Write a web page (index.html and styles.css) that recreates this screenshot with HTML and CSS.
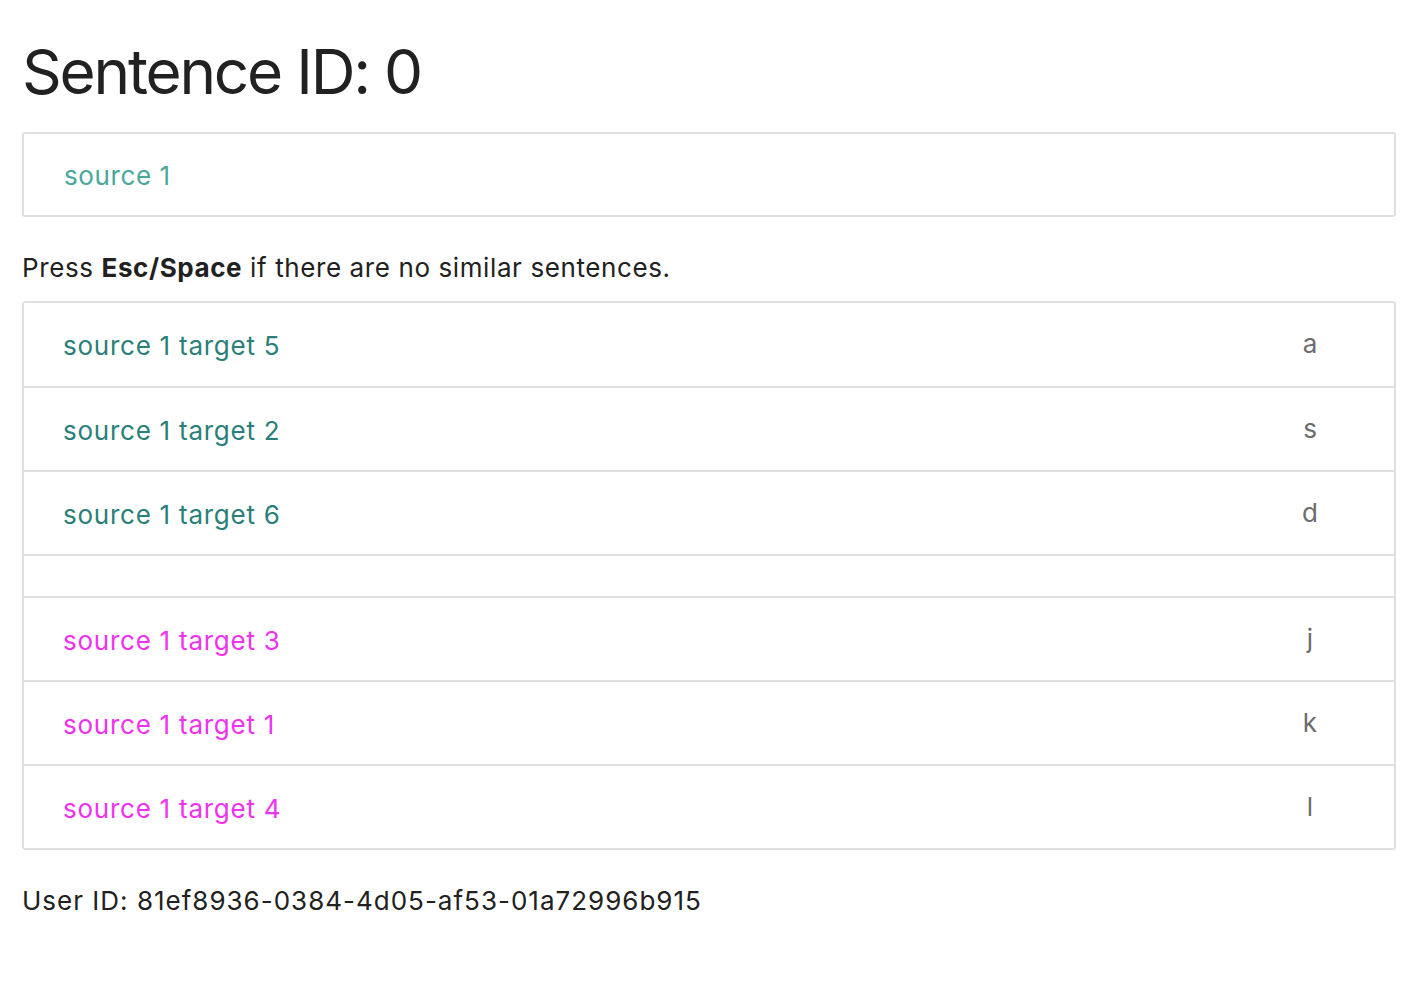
FILE: index.html
```html
<!DOCTYPE html>
<html>
<head>
<meta charset="utf-8">
<link rel="stylesheet" href="styles.css">
</head>
<body>
<div class="page">
  <h1 class="title">Sentence ID: 0</h1>
  <div class="card source-card"><span class="source">source 1</span></div>
  <p class="hint">Press <b>Esc/Space</b> if there are no similar sentences.</p>
  <ul class="list">
    <li class="row"><span class="txt teal">source 1 target 5</span><span class="key">a</span></li>
    <li class="row"><span class="txt teal">source 1 target 2</span><span class="key">s</span></li>
    <li class="row"><span class="txt teal">source 1 target 6</span><span class="key">d</span></li>
    <li class="row spacer"></li>
    <li class="row"><span class="txt pink">source 1 target 3</span><span class="key">j</span></li>
    <li class="row"><span class="txt pink">source 1 target 1</span><span class="key">k</span></li>
    <li class="row"><span class="txt pink">source 1 target 4</span><span class="key">l</span></li>
  </ul>
  <p class="user">User ID: 81ef8936-0384-4d05-af53-01a72996b915</p>
</div>
</body>
</html>
```
FILE: styles.css
```css
html, body { margin: 0; padding: 0; background: #fff; }
body { font-family: Inter, "Noto Sans", sans-serif; color: #212121; }
.page { padding: 0 14px 0 22px; }
.title { margin: 0; padding-top: 36px; font-size: 62px; font-weight: 400; line-height: 72px; letter-spacing: -2.2px; }
.card { border: 2px solid #e0e0e0; border-radius: 3px; }
.source-card { margin-top: 24px; height: 81px; display: flex; align-items: center; padding-left: 40px; }
.source { color: #4aa89a; font-size: 26px; letter-spacing: 0.6px; margin-top: 2px; }
.hint { margin: 34px 0 0; font-size: 26px; line-height: 34px; letter-spacing: 0.6px; }
.hint b { font-weight: 700; }
.list { list-style: none; margin: 16px 0 0; padding: 0; border: 2px solid #e0e0e0; border-radius: 3px; }
.row { display: flex; align-items: center; height: 82px; padding: 0 69px 0 39px; border-top: 2px solid #e0e0e0; }
.row:first-child { border-top: 0; height: 83px; }
.row.spacer { height: 40px; }
.txt { flex: 1; font-size: 26px; letter-spacing: 0.75px; margin-top: 2px; }
.teal { color: #2b7f7a; }
.pink { color: #ee33ee; }
.key { width: 30px; text-align: center; color: #6c6c6c; font-size: 26px; margin-top: -2px; }
.user { margin: 34px 0 0; font-size: 26px; line-height: 34px; letter-spacing: 1px; }
```
